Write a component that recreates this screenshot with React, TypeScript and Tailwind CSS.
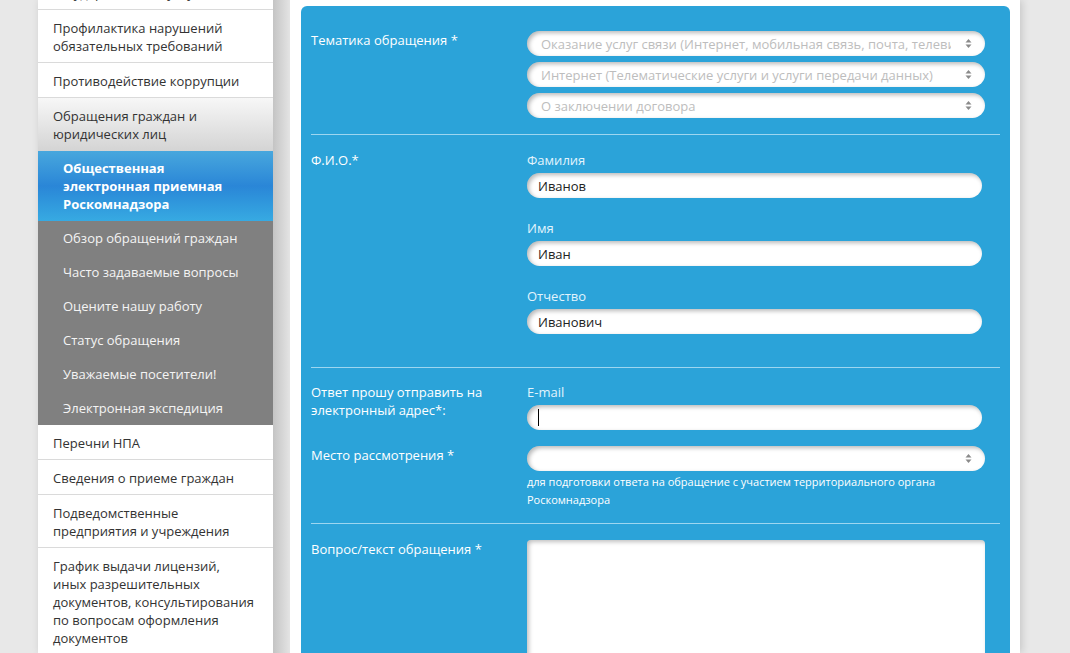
const font = { fontFamily: '"Open Sans", "Noto Sans", sans-serif' };

const topItems = [
  "Государственные услуги",
  "Профилактика нарушений обязательных требований",
  "Противодействие коррупции",
];

const subItems = [
  "Обзор обращений граждан",
  "Часто задаваемые вопросы",
  "Оцените нашу работу",
  "Статус обращения",
  "Уважаемые посетители!",
  "Электронная экспедиция",
];

const bottomItems: React.ReactNode[] = [
  "Перечни НПА",
  "Сведения о приеме граждан",
  "Подведомственные предприятия и учреждения",
  <>
    График выдачи лицензий,
    <br />
    иных разрешительных
    <br />
    документов, консультирования
    <br />
    по вопросам оформления
    <br />
    документов
  </>,
];

function Arrows() {
  return (
    <svg width="7" height="11" viewBox="0 0 7 11" className="shrink-0">
      <path d="M3.5 1 L6.5 4.5 L0.5 4.5 Z" fill="#8a8a8a" />
      <path d="M3.5 10 L6.5 6.5 L0.5 6.5 Z" fill="#8a8a8a" />
    </svg>
  );
}

function Select({ text }: { text?: string }) {
  return (
    <div className="flex h-[25px] w-[458px] items-center rounded-full bg-white pl-[14px] pr-[13px] shadow-[inset_2px_2px_4px_rgba(0,0,0,0.28)]">
      <span className="mr-[14px] flex-1 overflow-hidden whitespace-nowrap text-[13px] leading-[18px] text-[#bdbdbd]">{text}</span>
      <Arrows />
    </div>
  );
}

function Input({ value, caret }: { value?: string; caret?: boolean }) {
  return (
    <div className="flex h-[25px] w-[455px] items-center rounded-full bg-white pl-[11px] shadow-[inset_2px_2px_4px_rgba(0,0,0,0.28)]">
      {caret && <span className="h-[17px] w-px bg-black" />}
      <span className="text-[13px] leading-[18px] text-[#222]">{value}</span>
    </div>
  );
}

function Field({ label, value }: { label: string; value: string }) {
  return (
    <div className="flex flex-col gap-[4px]">
      <div className="text-[13px] leading-[18px] text-[#e2f4fd]">{label}</div>
      <Input value={value} />
    </div>
  );
}

function Row({ label, children, className = "" }: { label: React.ReactNode; children: React.ReactNode; className?: string }) {
  return (
    <div className={`grid grid-cols-[216px_1fr] ${className}`}>
      <div className="text-[13px] leading-[18px] text-white">{label}</div>
      <div>{children}</div>
    </div>
  );
}

function Divider() {
  return <div className="mr-[10px] h-px bg-[#9dd6f0]" />;
}

function Sidebar() {
  return (
    <div className="w-[235px] shrink-0 bg-white">
      <div className="-mt-[25px]">
        {topItems.map((t) => (
          <div key={t} className="border-b border-[#dadada] pb-[7px] pl-[15px] pr-[20px] pt-[9px] text-[13px] leading-[18px] text-[#333]">
            {t}
          </div>
        ))}
        <div className="bg-gradient-to-b from-[#f7f7f7] to-[#d4d4d4] pb-[8px] pl-[15px] pr-[40px] pt-[9px] text-[13px] leading-[18px] text-[#333]">
          Обращения граждан и юридических лиц
        </div>
        <div className="bg-gradient-to-b from-[#48a7dd] via-[#2a86d7] to-[#37aae2] py-[8px] pl-[25px] pr-[30px] text-[13px] font-bold leading-[18px] text-white">
          Общественная электронная приемная Роскомнадзора
        </div>
        <div className="bg-[#808080]">
          {subItems.map((s) => (
            <div key={s} className="py-[8px] pl-[25px] text-[13px] leading-[18px] text-[#f4f4f4]">
              {s}
            </div>
          ))}
        </div>
        {bottomItems.map((s, i) => (
          <div key={i} className="border-b border-[#dadada] pb-[7px] pl-[15px] pr-[10px] pt-[9px] text-[13px] leading-[18px] text-[#333]">
            {s}
          </div>
        ))}
      </div>
    </div>
  );
}

export default function App() {
  return (
    <div className="h-[653px] overflow-hidden bg-[#e8e8e8]" style={font}>
      <div className="ml-[38px] flex h-full w-[982px] shadow-[2px_0_8px_rgba(0,0,0,0.15)]">
        <Sidebar />
        <div className="w-[17px] shrink-0 bg-gradient-to-r from-[#c4c4c4] to-[#e4e4e4]" />
        <div className="flex-1 bg-white pl-[11px] pr-[10px] pt-[6px]">
          <div className="h-[700px] rounded-t-[6px] bg-[#2ba3d9] pl-[10px] pt-[9px]">
            <Row label="Тематика обращения *" className="pb-4 pt-4">
              <div className="flex flex-col gap-[6px]">
                <Select text="Оказание услуг связи (Интернет, мобильная связь, почта, телевидение)" />
                <Select text="Интернет (Телематические услуги и услуги передачи данных)" />
                <Select text="О заключении договора" />
              </div>
            </Row>
            <Divider />
            <Row label="Ф.И.О.*" className="pb-[33px] pt-4">
              <div className="flex flex-col gap-[21px]">
                <Field label="Фамилия" value="Иванов" />
                <Field label="Имя" value="Иван" />
                <Field label="Отчество" value="Иванович" />
              </div>
            </Row>
            <Divider />
            <div className="flex flex-col gap-[16px] pb-[14px] pt-[15px]">
              <Row label="Ответ прошу отправить на электронный адрес*:">
                <div className="flex flex-col gap-[4px]">
                  <div className="text-[13px] leading-[18px] text-[#e2f4fd]">E-mail</div>
                  <Input caret />
                </div>
              </Row>
              <Row label="Место рассмотрения *">
                <Select />
                <div className="mt-[2px] w-[440px] text-[11px] leading-[18px] text-white">
                  для подготовки ответа на обращение с участием территориального органа Роскомнадзора
                </div>
              </Row>
            </div>
            <Divider />
            <Row label="Вопрос/текст обращения *" className="pt-4">
              <div className="h-[150px] w-[458px] rounded-[4px] bg-white shadow-[inset_2px_2px_4px_rgba(0,0,0,0.25)]" />
            </Row>
          </div>
        </div>
      </div>
    </div>
  );
}
